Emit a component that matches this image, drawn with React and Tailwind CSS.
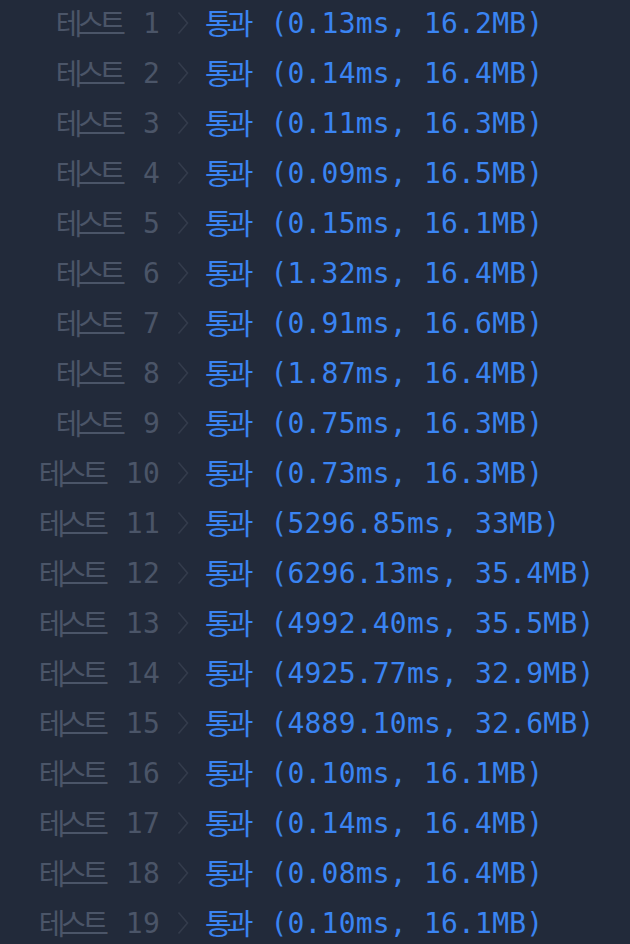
const rows = [
  ["1", "0.13ms, 16.2MB"],
  ["2", "0.14ms, 16.4MB"],
  ["3", "0.11ms, 16.3MB"],
  ["4", "0.09ms, 16.5MB"],
  ["5", "0.15ms, 16.1MB"],
  ["6", "1.32ms, 16.4MB"],
  ["7", "0.91ms, 16.6MB"],
  ["8", "1.87ms, 16.4MB"],
  ["9", "0.75ms, 16.3MB"],
  ["10", "0.73ms, 16.3MB"],
  ["11", "5296.85ms, 33MB"],
  ["12", "6296.13ms, 35.4MB"],
  ["13", "4992.40ms, 35.5MB"],
  ["14", "4925.77ms, 32.9MB"],
  ["15", "4889.10ms, 32.6MB"],
  ["16", "0.10ms, 16.1MB"],
  ["17", "0.14ms, 16.4MB"],
  ["18", "0.08ms, 16.4MB"],
  ["19", "0.10ms, 16.1MB"],
];

export default function App() {
  return (
    <div className="w-[630px] h-[944px] overflow-hidden bg-[#222a3a] font-['DejaVu_Sans_Mono','Noto_Sans_CJK_KR',monospace] text-[28px]">
      <div className="-mt-[2px] flex flex-col">
        {rows.map(([n, r]) => (
          <div key={n} className="flex h-[50px] items-center leading-[50px] whitespace-pre">
            <div className="w-[160px] text-right text-[#4b5568] tracking-[0.2px]">
              <span className="text-[29px] font-normal tracking-[-5px] align-[-2px] font-['Noto_Sans_CJK_KR',sans-serif] mr-[5px]">테스트</span>
              {" " + n}
            </div>
            <svg className="ml-[17px]" width="12" height="24" viewBox="0 0 12 24" fill="none">
              <path d="M1.5 1.5 L10.5 12 L1.5 22.5" stroke="#343c4c" strokeWidth="1.6" />
            </svg>
            <div className="ml-[16px] text-[#3a84f2] tracking-[0.2px]">
              <span className="text-[29px] font-normal tracking-[-5px] align-[-2px] font-['Noto_Sans_CJK_KR',sans-serif] mr-[5px]">통과</span>
              {" (" + r + ")"}
            </div>
          </div>
        ))}
      </div>
    </div>
  );
}
